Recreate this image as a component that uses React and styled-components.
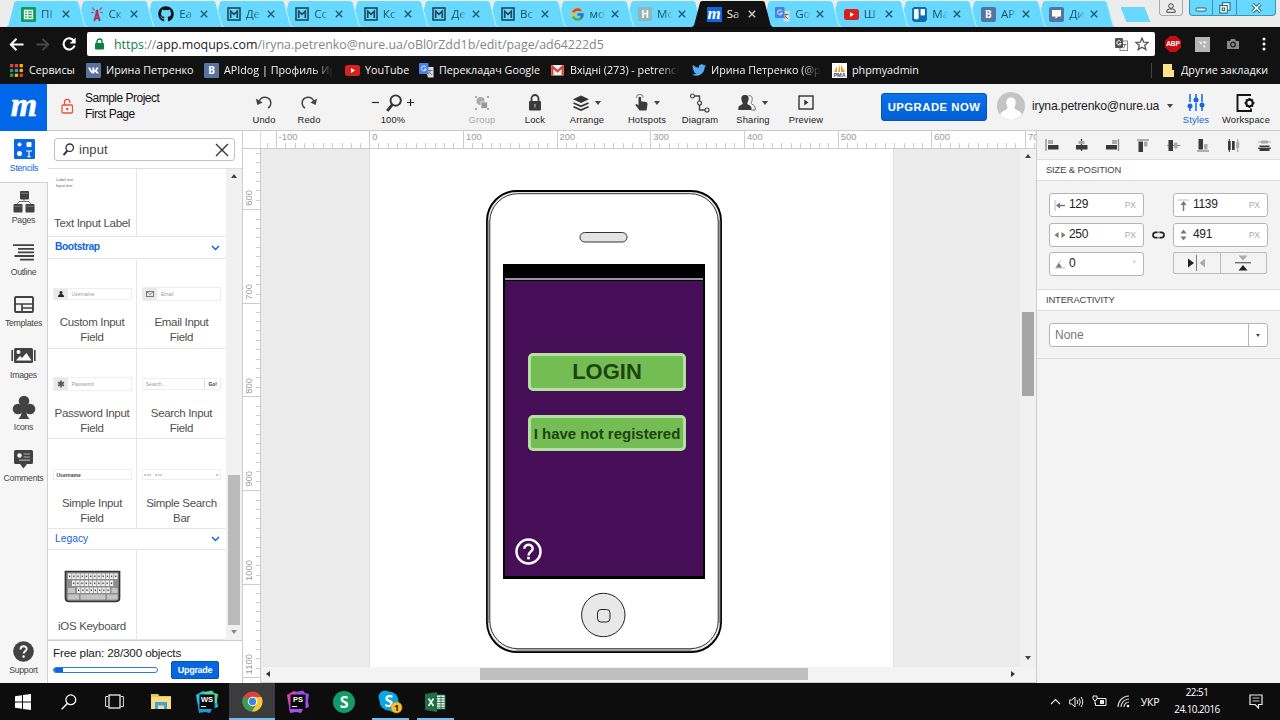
import React from "react";
import styled, { createGlobalStyle, css } from "styled-components";
import { FaGithub, FaTwitter, FaVk, FaTrello } from "react-icons/fa";
import { FcGoogle } from "react-icons/fc";

const Global = createGlobalStyle`
  * { box-sizing: border-box; }
  html, body { margin: 0; padding: 0; overflow: hidden; }
  body { width: 1280px; height: 720px; font-family: "Liberation Sans", Arial, sans-serif; color: #222; }
  svg { display: block; flex: none; }
`;

const ui = `"Open Sans", "Noto Sans", sans-serif`;

const Desktop = styled.div`
  width: 1280px; height: 720px; display: flex; flex-direction: column; overflow: hidden; background: #111;
`;

/* ---------- browser window ---------- */
const TabStrip = styled.div`
  height: 27px; flex: none; display: flex; align-items: flex-end; padding-left: 6.5px;
  background: #ececec; font-family: ${ui}; position: relative;
`;
const Tab = styled.div`
  position: relative; z-index: ${p => (p.$active ? 30 : 20 - p.$n)};
  width: 79.5px; height: 26px; margin-right: -10.95px; flex: none;
  display: flex; align-items: center; padding-left: 14.5px;
  color: ${p => (p.$active ? "#fff" : "#21505f")}; font-size: 11.6px;
  &::before, &::after {
    content: ""; position: absolute; inset: 0; z-index: -1;
    background: ${p => (p.$active ? "#121212" : "#67d8ff")};
    clip-path: polygon(0 100%, 2px 92%, 8px 4%, 10px 0, 69.5px 0, 71.5px 4%, 77.5px 92%, 79.5px 100%);
  }
  &::before { background: ${p => (p.$active ? "#121212" : "#c5effc")}; transform: translateX(1px); }
  isolation: isolate;
`;
const TabTitle = styled.span`
  width: 16px; margin-left: 5px; overflow: hidden; white-space: nowrap; line-height: 18px;
  mask-image: linear-gradient(90deg, #000 45%, transparent 100%);
`;
const TabGap = styled.span`width: 5px;`;
const NewTab = styled.div`
  width: 30px; height: 15px; margin: 0 0 5px 17px; background: #67d8ff; clip-path: polygon(0 0, 24px 0, 30px 100%, 6px 100%);
`;
const WindowButtons = styled.div`
  position: absolute; right: 4px; top: 0; display: flex; gap: 6px;
`;
const WinGroup = styled.div`
  height: 16px; display: flex; border: 1px solid ${p => (p.$plain ? "#a9a9a9" : "#3c93ae")}; border-top: 0; border-radius: 0 0 4px 4px;
  background: ${p => (p.$plain ? "#ececec" : "#67d8ff")}; overflow: hidden;
`;
const WinButton = styled.div`
  width: ${p => p.$w}px; display: flex; align-items: center; justify-content: center;
  & + & { border-left: 1px solid #3c93ae; }
`;
const AddressRow = styled.div`
  height: 33px; flex: none; background: #121212; display: flex; align-items: center; border-top: 1px solid #0a0a0a;
  padding-left: 9px;
`;
const NavIcons = styled.div`display: flex; gap: 12px; width: 78px; align-items: center;`;
const UrlBox = styled.div`
  width: 1068px; height: 24px; background: #fff; border-radius: 2px; display: flex; align-items: center;
  padding: 0 6px 0 8px; font-family: ${ui}; font-size: 12.42px; color: #858585;
`;
const UrlText = styled.span`
  flex: 1; margin-left: 10px; white-space: nowrap;
  b { font-weight: 400; color: #0b8043; } i { font-style: normal; color: #222; }
`;
const Extensions = styled.div`display: flex; align-items: center; flex: 1; padding-left: 10px;`;
const Abp = styled.div`
  width: 16px; height: 16px; background: #c70d12; color: #fff; font: bold 6.5px/16px "Liberation Sans", sans-serif; text-align: center;
  clip-path: polygon(30% 0, 70% 0, 100% 30%, 100% 70%, 70% 100%, 30% 100%, 0 70%, 0 30%);
`;
const Bookmarks = styled.div`
  height: 24px; flex: none; background: #121212; display: flex; align-items: center; padding: 0 0 4px 10px;
  font-family: ${ui}; font-size: 10.75px; color: #f4f4f4;
`;
const Bookmark = styled.div`
  display: flex; align-items: center; width: ${p => p.$w}px; flex: none; gap: ${p => p.$gap || 6}px; white-space: nowrap;
  span { overflow: hidden; 
    ${p => p.$fade && css`max-width: ${p.$fade}px; mask-image: linear-gradient(90deg, #000 82%, transparent 100%);`} }
`;
const Divider = styled.div`width: 1px; height: 15px; background: #444; margin-right: 11px;`;
const Badge = styled.div`
  width: ${p => p.$s || 15}px; height: ${p => p.$s || 15}px; flex: none; background: ${p => p.$bg}; color: ${p => p.$c || "#fff"};
  display: flex; align-items: center; justify-content: center; font: ${p => p.$font || `bold 10px ${ui}`}; border-radius: ${p => p.$r || 0}px;
`;

/* ---------- moqups app ---------- */
const AppBar = styled.div`
  height: 47px; flex: none; display: flex; background: #f3f3f3; border-bottom: 1px solid #ccc; color: #222;
`;
const Logo = styled.div`
  width: 47px; height: 47px; background: #0068e8; color: #fff; display: flex; align-items: center; justify-content: center; flex: none;
`;
const Project = styled.div`
  width: 194px; padding-left: 14px; display: flex; align-items: center; gap: 11px; font-size: 12px; line-height: 16px; color: #111;
  white-space: nowrap; padding-bottom: 3px; letter-spacing: -0.5px; flex: none;
`;
const Tool = styled.div`
  width: ${p => p.$w}px; flex: none; display: flex; flex-direction: column; align-items: center; padding-top: 8px;
  color: ${p => p.$color || "#333"};
`;
const ToolIcon = styled.div`height: 21px; display: flex; align-items: center; gap: 6px;`;
const ToolLabel = styled.div`
  font-size: 9.4px; line-height: 13px; color: ${p => p.$color || "#222"}; white-space: nowrap; letter-spacing: 0.15px;
`;
const Caret = styled.i`
  border: ${p => p.$s || 3}px solid transparent; border-top: ${p => (p.$s || 3) + 1}px solid ${p => p.$c || "#444"}; border-bottom: 0;
`;
const Upgrade = styled.div`
  width: 106px; height: 28px; margin: 9px 10px 0 56px; border-radius: 3px; border: 1px solid #0553b3; background: linear-gradient(#0a72ea, #025fd6);
  color: #fff; font-size: 11.3px; font-weight: bold; letter-spacing: 0.5px; text-align: center; line-height: 26px; white-space: nowrap; flex: none;
`;
const Account = styled.div`
  width: 183px; display: flex; align-items: center; font-size: 12.2px; color: #222; white-space: nowrap; padding-bottom: 2px; flex: none;
  span { width: 128px; margin: 0 7px 0 7px; letter-spacing: -0.17px; }
`;
const Workspace = styled.div`height: 552px; flex: none; display: flex; overflow: hidden; background: #fff;`;
const Rail = styled.div`
  width: 48px; flex: none; background: #f6f6f6; border-right: 1px solid #d2d2d2; display: flex; flex-direction: column;
`;
const RailItem = styled.div`
  height: 51.6px; flex: none; display: flex; flex-direction: column; align-items: center; justify-content: flex-end;
  padding-bottom: 7px; font-size: 8.7px; color: #444;
  ${p => p.$active && css`background: #fff; color: #0862d9; margin-right: -1px; border-bottom: 1px solid #d2d2d2;`}
  ${p => p.$last && css`margin-top: auto; padding-bottom: 6px;`}
`;
const RailIcon = styled.div`height: 24px; display: flex; align-items: center; margin-bottom: 1px;`;
const RailLabel = styled.div`line-height: 13px; white-space: nowrap; letter-spacing: -0.27px;`;

const Stencils = styled.div`width: 195px; flex: none; display: flex; flex-direction: column; border-right: 1px solid #ccc; background: #fff;`;
const Search = styled.div`
  height: 23px; margin: 7px 7px 7px 6px; flex: none; border: 1px solid #c2c2c2; border-radius: 3px; display: flex; align-items: center;
  padding: 0 5px 0 7px; font-size: 13px; color: #444;
  span { flex: 1; margin-left: 4px; letter-spacing: 0.1px; }
`;
const ListArea = styled.div`height: 472px; flex: none; display: flex; border-top: 1px solid #ddd;`;
const List = styled.div`width: 178px; flex: none;`;
const Row = styled.div`height: ${p => p.$h}px; display: grid; grid-template-columns: 88px 90px; border-bottom: 1px solid #e6e6e6;`;
const Cell = styled.div`
  display: flex; flex-direction: column; align-items: center; font-size: 11.5px; line-height: 15px; text-align: center; color: #505050;
  padding-top: ${p => p.$top}px; white-space: pre;
  & + & { border-left: 1px solid #e6e6e6; }
`;
const CellName = styled.div`margin-top: ${p => p.$mt}px; letter-spacing: -0.32px;`;
const Section = styled.div`
  height: ${p => p.$h}px; padding: 0 6px 2px 7px; display: flex; align-items: center; justify-content: space-between; font-size: 10.3px; color: #1265dc;
  border-bottom: 1px solid #e6e6e6; font-weight: ${p => (p.$bold ? 700 : 400)};
  letter-spacing: ${p => (p.$bold ? -0.45 : 0)}px;
`;
const Field = styled.div`
  width: 79px; height: ${p => p.$h || 12}px; border: 1px solid #eee; display: flex; align-items: center; font-size: 5px; line-height: 6px; color: #999;
`;
const FieldAddon = styled.div`
  width: 14px; height: 100%; background: #e9e9e9; display: flex; align-items: center; justify-content: center; margin-right: 4px;
`;
const FieldEnd = styled.div`
  margin-left: auto; height: 100%; padding: 2px 3px; border-left: 1px solid #ddd; color: #333; font-weight: bold;
`;
const FieldStrong = styled.b`margin-left: 3px; color: #444;`;
const MiniText = styled.div`
  width: 76px; font-size: 4px; line-height: 6px; text-align: left; color: #666; padding-left: 2px; margin-bottom: 13px;
`;
const ScrollY = styled.div`
  width: 16px; flex: none; background: #f1f1f1; display: flex; flex-direction: column; align-items: center; padding-top: 5px;
`;
const Thumb = styled.div`
  width: 12px; height: ${p => p.$h}px; background: ${p => p.$c || "#bbb"}; margin: ${p => p.$mt}px 0 ${p => p.$mb}px; flex: none;
`;
const ArrowUp = styled.i`border: 3px solid transparent; border-bottom: 4px solid #444; border-top: 0;`;
const Plan = styled.div`
  flex: 1; border-top: 1px solid #ccc; padding: 5px 23px 0 5px; font-size: 11.7px; line-height: 14px; color: #222; letter-spacing: -0.15px; white-space: nowrap;
`;
const PlanRow = styled.div`display: flex; align-items: center; justify-content: space-between; margin-top: 1px;`;
const Progress = styled.div`
  width: 105px; height: 6px; border: 1px solid #2d7be0; border-radius: 3px; overflow: hidden;
  &::before { content: ""; display: block; height: 100%; width: 9px; background: #0a66dd; }
`;
const PlanButton = styled.div`
  width: 48px; height: 18px; border-radius: 2px; background: #0668e0; border: 1px solid #0553b3; color: #fff; font-size: 9px; font-weight: bold; line-height: 17px; text-align: center; letter-spacing: -0.3px;
`;

const Editor = styled.div`width: 793px; flex: none; display: flex; flex-direction: column;`;
const RulerX = styled.div`
  height: 18px; flex: none; display: flex; overflow: hidden; background: #fff; border-bottom: 1px solid #ccc;
`;
const Corner = styled.div`width: 18px; flex: none; border-right: 1px solid #ddd;`;
const TicksX = styled.div`
  width: ${p => p.$w}px; flex: none; border-left: ${p => (p.$bare ? 0 : "1px solid #ccc")}; font-size: 9.3px; line-height: 12px; color: #999; padding-left: 2px;
  letter-spacing: 0.1px;
  background: repeating-linear-gradient(${p => (p.$bare ? 270 : 90)}deg, transparent 0 8.37px, #ccc 8.37px 9.37px) 0 100% / 100% 5px no-repeat;
`;
const EditorBody = styled.div`flex: 1; display: flex; min-height: 0;`;
const RulerY = styled.div`
  width: 18px; flex: none; overflow: hidden; border-right: 1px solid #ccc; background: #fff; display: flex; flex-direction: column;
`;
const TicksY = styled.div`
  height: ${p => p.$h}px; flex: none; border-bottom: 1px solid #ccc; display: flex; align-items: flex-end; padding-bottom: 3px;
  background: repeating-linear-gradient(0deg, transparent 0 8.37px, #ccc 8.37px 9.37px) 100% 0 / 4px 100% no-repeat;
  span { writing-mode: vertical-rl; transform: rotate(180deg); font-size: 9.3px; line-height: 12px; color: #999; letter-spacing: 0.1px; }
`;
const Scroller = styled.div`flex: 1; display: flex; flex-direction: column; min-width: 0;`;
const Stage = styled.div`height: 518px; flex: none; display: flex;`;
const Board = styled.div`flex: 1; background: #ececec; position: relative; padding-left: 108px;`;
const Page = styled.div`width: 525px; height: 518px; background: #fff; border: 1px solid #e0e0e0; border-width: 0 1px;`;
const ScrollX = styled.div`
  height: 16px; background: #f3f3f3; display: flex; align-items: center; padding: 0 21px 1px 5px; border-bottom: 1px solid #ccc;
`;
const ThumbX = styled.div`width: 328px; height: 12px; background: #bfbfbf; margin: 0 auto 0 210px;`;
const ArrowSide = styled.i`
  border: 3px solid transparent; ${p => (p.$left ? "border-right: 4px solid #333; border-left: 0;" : "border-left: 4px solid #333; border-right: 0;")}
`;

/* phone mock-up placed freely on the board */
const Phone = styled.div`position: absolute; left: 225px; top: 41px; width: 236px; height: 463px;`;
const Screen = styled.div`
  position: absolute; left: 17px; top: 74px; width: 202px; height: 315px; border: solid #000; border-width: 14px 2px 3px 2px; background: #460e56;
  &::before { content: ""; display: block; height: 2px; background: #999; border-bottom: 1px solid #000; }
`;
const PhoneButton = styled.div`
  position: absolute; left: 42px; top: ${p => p.$y}px; width: 158px; height: ${p => p.$h}px; border: 3px solid #b5dfa0; border-radius: 5px;
  background: #73bd54; color: #1f4211; font-weight: bold; font-size: ${p => p.$fs}px;
  display: flex; align-items: center; justify-content: center; white-space: nowrap;
`;
const Help = styled.div`position: absolute; left: 29px; top: 348px;`;

/* ---------- inspector ---------- */
const Inspector = styled.div`width: 244px; flex: none; background: #f3f3f3; border-left: 1px solid #ccc; display: flex; flex-direction: column;`;
const AlignRow = styled.div`height: 28px; display: flex; align-items: center;`;
const AlignItem = styled.div`width: 30.3px; display: flex; justify-content: center;`;
const Heading = styled.div`
  height: 22px; background: #fff; border: 1px solid #ddd; border-width: 1px 0; font-size: 9.4px; line-height: 20px; padding-left: 9px; color: #444;
  letter-spacing: -0.13px;
`;
const Form = styled.div`
  height: 108px; display: grid; grid-template-columns: 95px 29px 95px; grid-auto-rows: 24px; row-gap: 5.7px; padding: 12px 0 0 12px;
`;
const Input = styled.div`
  border: 1px solid #b5b5b5; border-radius: 3px; background: #fff; display: flex; align-items: center; font-size: 12px; color: #222; padding: 0 7px 0 4px;
  span { flex: 1; margin: -2px 0 0 3px; letter-spacing: -0.3px; } small { font-size: 8.5px; color: #aaa; }
`;
const Link = styled.div`display: flex; align-items: center; justify-content: center;`;
const Flip = styled.div`
  height: 22px; width: 94px; border: 1px solid #bbb; border-radius: 2px; display: flex;
  div { flex: 1; display: flex; align-items: center; justify-content: center; } div + div { border-left: 1px solid #bbb; }
`;
const SelectWrap = styled.div`height: 48px; padding: 12px 12px 0; border-bottom: 1px solid #ddd;`;
const Select = styled.div`
  width: 219px; height: 24px; border: 1px solid #b5b5b5; border-radius: 3px; background: #fff; display: flex; font-size: 12px; line-height: 22px; color: #777;
  span { flex: 1; padding-left: 5px; } div { width: 19px; border-left: 1px solid #b5b5b5; display: flex; align-items: center; justify-content: center; }
`;

/* ---------- windows taskbar ---------- */
const Taskbar = styled.div`height: 37px; flex: none; background: #0d0d0e; display: flex; align-items: stretch; color: #fff; font-family: ${ui};`;
const Task = styled.div`
  width: 45.9px; display: flex; align-items: center; justify-content: center; flex: none;
  background: ${p => (p.$active ? "#3c3c3e" : "none")};
  box-shadow: ${p => (p.$active ? "inset 0 -2px #76b9ed" : "none")};
  ${p => p.$open && css`background: linear-gradient(#76b9ed, #76b9ed) 50% 100% / 37px 2px no-repeat;`}
`;
const Tray = styled.div`margin-left: auto; display: flex; align-items: center; font-size: 10.5px; padding-right: 17px;`;
const TrayItem = styled.div`width: ${p => p.$w}px; display: flex; justify-content: center; white-space: nowrap; letter-spacing: -0.3px;`;
const Clock = styled.div`width: 64px; text-align: center; font-size: 9.9px; line-height: 17px; letter-spacing: -0.5px; margin: 0 20px 1px 0;`;

/* ---------- drawings ---------- */
const Svg = ({ w, h = w, vb, children, ...r }) => (
  <svg width={w} height={h} viewBox={vb || `0 0 ${w} ${h}`} fill="none" {...r}>{children}</svg>
);
const Gmark = () => (
  <Svg w={14}><rect x="1" y="1" width="12" height="12" stroke="#1f4859" strokeWidth="1.6" /><path d="M3.7 11V4.2L7 7.4l3.3-3.2V11" stroke="#1f4859" strokeWidth="1.7" /></Svg>
);
const Sheets = () => (
  <Svg w={15}><rect width="15" height="15" rx="1" fill="#109d58" /><path d="M3.5 3.5h8v8h-8zM3.5 6.2h8M3.5 8.8h8M6.5 3.5v8" stroke="#fff" strokeWidth="1.3" /></Svg>
);
const Tower = () => (
  <Svg w={14} h={15}><path d="M7 4.5L4.3 14M7 4.5L9.7 14M5.4 8.5h3.2M4.9 11.3h4.4" stroke="#b0305a" strokeWidth="1.9" /><circle cx="7" cy="4" r="1.5" fill="#b0305a" /><path d="M4 5L1 6M4.5 3L2 .5M10 5l3 1M9.5 3L12 .5" stroke="#d04468" strokeWidth="1.1" /></Svg>
);
const Translate = () => (
  <Svg w={15}><path d="M6 4h8.5v10.5H9z" fill="#ddd" /><rect width="9.5" height="11" rx="1" fill="#4a80ea" /><path d="M7 4.2a2.4 2.4 0 1 0 .2 2H5" stroke="#fff" /><path d="M8.5 7.5h5M11 6.5v1c0 2-1 3.4-2 4.2M10 9l3 3" stroke="#777" /></Svg>
);
const Tube = () => (<Svg w={15} h={11}><rect width="15" height="11" rx="2.5" fill="#d8201f" /><path d="M6 3v5l4-2.5z" fill="#fff" /></Svg>);
const Cross = ({ c = "#24596b", s = 8 }) => (<Svg w={s} vb="0 0 8 8"><path d="M.8.8l6.4 6.4M7.2.8L.8 7.2" stroke={c} strokeWidth="1.4" /></Svg>);
const Speech = () => (<Badge $bg="#56749e" $r={2}><Svg w={9} h={9}><path d="M0 0h9v6.5H6L3.5 9V6.5H0z" fill="#fff" /></Svg></Badge>);
const MLogo = ({ s, fs }) => (
  <Badge $s={s} $bg="#0d66e6" $font={`italic bold ${fs}px/10px "Liberation Serif", serif`}>m</Badge>
);
const Magnifier = ({ s = 16, c = "#333", w = 1.6 }) => (
  <Svg w={s} vb="0 0 16 16"><circle cx="9.5" cy="5.8" r="4.6" stroke={c} strokeWidth={w} /><path d="M6.5 9.5L2 15" stroke={c} strokeWidth={w * 1.5} /></Svg>
);
const Chevron = () => (<Svg w={9} h={6} style={{ marginTop: 2 }}><path d="M1 1l3.5 3.5L8 1" stroke="#1265dc" strokeWidth="1.5" /></Svg>);
const UndoIcon = ({ flip }) => (
  <Svg w={18} h={16} style={flip ? { transform: "scaleX(-1)" } : undefined}>
    <path d="M4 6.5C5.5 3 8.5 1.8 11.5 2.5c5 1.2 5.8 7.5 1.5 10.7" stroke="#444" strokeWidth="1.5" /><path d="M.8 3.6l1.6 6.4 5.2-2.4z" fill="#444" />
  </Svg>
);
const Carets = ({ d }) => <path d={d} fill="#777" />;

const tabs = [
  [<Sheets />, "ПІ"], [<Tower />, "Ск"], [<FaGithub size={16} color="#111" />, "Ea"], [<Gmark />, "Де"], [<Gmark />, "Сс"], [<Gmark />, "Кс"],
  [<Gmark />, "Де"], [<Gmark />, "Вс"], [<FcGoogle size={15} />, "мо"], [<Badge $bg="#95b3b8" $s={14}>H</Badge>, "Мо"],
  [<MLogo s={15} fs={17} />, "Sa"], [<Translate />, "Go"], [<Tube />, "Ш"], [<Badge $bg="#fff"><FaTrello size={17} color="#0b6caf" /></Badge>, "Ма"],
  [<Badge $bg="#56749e" $r={2}>B</Badge>, "AP"], [<Speech />, "Ди"],
];

const Keyboard = () => (
  <Svg w={57} h={33}>
    <path d="M1.500 1.500h54V28q0 3.500-4 3.500H5.500q-4 0-4-3.500z" fill="#8e8e8e" stroke="#333" strokeWidth="1.7" />
    {[[4, 12], [8, 10], [13, 8]].map(([x, n], r) => Array.from({ length: n }, (_, i) => (
      <g key={`${r}-${i}`}><rect x={x + i * 4.2} y={3.5 + r * 7} width="3.4" height="5.5" fill="#f2f2f2" /><rect x={x + 1 + i * 4.2} y={5.5 + r * 7} width="1.3" height="1.6" fill="#444" /></g>
    )))}
    <path d="M4 18h7v5H4zM47.500 18h6v5h-6zM4 24.500h11v5H4zM16.500 24.500h25v5h-25zM43 24.500h10.500v5H43z" fill="#c5c5c5" />
  </Svg>
);

const ink = "#424242";
const rail = [
  ["Stencils", <Svg w={21} h={20}><rect width="21" height="20" rx="1" fill="#0868e6" /><path d="M5.5 3.5v4M3.5 5.5h4" stroke="#fff" strokeWidth="1.8" /><rect x="12.5" y="3" width="5" height="5" rx="1" fill="#fff" /><circle cx="5.500" cy="14.5" r="2.5" fill="#fff" /><path d="M12 12h6M15 12v6M13.5 17.6h3" stroke="#fff" strokeWidth="1.2" /></Svg>],
  ["Pages", <Svg w={22} h={23}><path d="M11 9v3M4 14l2-2.500h10l2 2.500" stroke="#777" /><rect x="7" y="1" width="9" height="8.5" rx="1" fill={ink} /><rect x="0.5" y="14" width="9" height="8.5" rx="1" fill={ink} /><rect x="12.5" y="14" width="9" height="8.5" rx="1" fill={ink} /><path d="M8 3.300h7M1.500 16.300h7M13.500 16.300h7" stroke="#999" strokeWidth=".7" /></Svg>],
  ["Outline", <Svg w={21} h={17}><path d="M0 1.200h21M5 4.800h16M5 8.400h16M1.500 12h19.500M7 15.600h14" stroke={ink} strokeWidth="1.8" /></Svg>],
  ["Templates", <Svg w={20} h={17}><rect x="1" y="1" width="18" height="15" rx="1" stroke={ink} strokeWidth="1.9" /><path d="M1 8h18M8 8v8M8 12h11" stroke={ink} strokeWidth="1.7" /></Svg>],
  ["Images", <Svg w={25} h={17}><rect x="3" y="1" width="19" height="15" rx="1.5" fill={ink} /><path d="M1.200 3v11M23.800 3v11" stroke={ink} strokeWidth="1.6" /><path d="M5 13.500l4-4.500 2 2 4.500-5 5 7.500z" fill="#fff" /><circle cx="7.5" cy="5" r="2" fill="#fff" /></Svg>],
  ["Icons", <Svg w={24} h={25}><circle cx="12" cy="6" r="5.3" fill={ink} /><circle cx="6" cy="14" r="5.3" fill={ink} /><circle cx="18" cy="14" r="5.3" fill={ink} /><path d="M9 8h6v8l-1 .5q.8 5 3.500 7.500h-11q2.700-2.500 3.500-7.500L9 16z" fill={ink} /></Svg>],
  ["Comments", <Svg w={19} h={19}><path d="M1.500 0h16Q19 0 19 1.500v11q0 1.500-1.500 1.500H13l-3.500 4.500L6 14H1.500Q0 14 0 12.500v-11Q0 0 1.500 0z" fill={ink} /><circle cx="5.5" cy="5.5" r="2.2" fill="#fff" /><path d="M9.500 4H16M9.500 7H16M5 10.200h11" stroke="#aaa" strokeWidth="1.2" /></Svg>],
];

const A = "#3a3a3a", G = "#aaa";
const aligns = [
  <Svg w={14} h={12}><path d="M1 0v12" stroke="#888" strokeWidth="1.3" /><path d="M3 1h5v4H3z" fill={G} /><path d="M3 6h10.500v4.500H3z" fill={A} /></Svg>,
  <Svg w={14} h={12}><path d="M6.500 0v12" stroke={A} strokeWidth="1.3" /><path d="M3.500 2h6v3h-6z" fill={G} /><path d="M1 6h11.500v4.500H1z" fill={A} /></Svg>,
  <Svg w={14} h={12}><path d="M12.500 0v12" stroke="#888" strokeWidth="1.3" /><path d="M6 1h5v4H6z" fill={G} /><path d="M0 6h11v4.500H0z" fill={A} /></Svg>,
  <Svg w={13} h={13}><path d="M0 1h12" stroke="#888" strokeWidth="1.3" /><path d="M1.500 2.500H6V13H1.500z" fill={A} /><path d="M7 2.500h3.500v5H7z" fill={G} /></Svg>,
  <Svg w={13} h={13}><path d="M0 6.500h13" stroke="#777" /><path d="M1.500 1H6v11H1.500z" fill={A} /><path d="M7 3.500h3.500v6H7z" fill={G} /></Svg>,
  <Svg w={13} h={13}><path d="M0 12h12" stroke="#888" strokeWidth="1.3" /><path d="M1.500 0H6v10.500H1.500z" fill={A} /><path d="M7 5h3.500v5.500H7z" fill={G} /></Svg>,
  <Svg w={13} h={13}><path d="M1 2h2.700v9H1zM5 2h2.700v9H5z" fill={A} /><path d="M2.300 0v13" stroke={A} /><path d="M10.700 0v13" stroke={G} strokeWidth="1.2" /><path d="M9.200 3h3v6h-3z" fill={G} /></Svg>,
  <Svg w={13} h={13}><path d="M0 3h13" stroke={G} /><path d="M3 1.500h7v3H3z" fill={G} /><path d="M0 9.200h13" stroke={A} strokeWidth="1.2" /><path d="M1.500 6.500h10V8h-10zM1.500 9h10v3h-10z" fill={A} /></Svg>,
];

const jet = (colors, label) => (
  <Svg w={24} h={24}>
    <path d="M1 5L8 1l5 2-3 18-6 1z" fill={colors[0]} /><path d="M9 2l8-1.500L19 3l4 1-1 7 1 6-8 2z" fill={colors[1]} /><path d="M3 14l19-1-1 5-4 1-2 4-5-1-6 1z" fill={colors[2]} />
    <rect x="4.500" y="4.500" width="15" height="14.500" fill="#080808" /><text x="12" y="12" fill="#fff" fontSize="7.500" fontWeight="bold" textAnchor="middle" fontFamily="Liberation Sans, sans-serif">{label}</text><path d="M6 16.500h5" stroke="#fff" />
  </Svg>
);

const tasks = [
  [<Svg w={16}><path d="M0 2.200L7 1.200V7.500H0zM8 1l8-1v7.500H8zM0 8.500h7v6.300l-7-1zM8 8.500h8V16l-8-1z" fill="#fff" /></Svg>],
  [<Svg w={16}><circle cx="9.800" cy="5.800" r="4.900" stroke="#fff" strokeWidth="1.3" /><path d="M6.300 9.500L.7 15.300" stroke="#fff" strokeWidth="1.4" /></Svg>],
  [<Svg w={19} h={15}><rect x="4" y="1" width="11" height="13" stroke="#fff" strokeWidth="1.2" /><path d="M3 2.500H.6v10H3M16 2.500h2.400v10H16" stroke="#ddd" /></Svg>],
  [<Svg w={20} h={17}><path d="M0 1h7l1.500 2H20v13H0z" fill="#e9c45b" /><path d="M0 4h20v12H0z" fill="#fbdc80" /><path d="M4 16V9h12v7h-3v-3.500H7V16z" fill="#3fa3de" /></Svg>],
  [jet(["#24bfe8", "#4fd6a8", "#159bd7"], "WS")],
  [<Svg w={21} vb="0 0 24 24"><circle cx="12" cy="12" r="11.5" fill="#d9453a" /><path d="M12 12L2 6.300A11.500 11.500 0 0 0 11.500 23.500L17 15z" fill="#3a9e52" /><path d="M12 6.800h10.200A11.500 11.500 0 0 1 11.500 23.500L16.500 14.600z" fill="#f5c932" /><circle cx="12" cy="12" r="5.4" fill="#fff" /><circle cx="12" cy="12" r="4.2" fill="#4285e8" /></Svg>, "active"],
  [jet(["#e344b2", "#9a4cf0", "#a94cf2"], "PS")],
  [<Badge $s={22} $bg="#109b67" $r={11} $font={'bold 16px "Open Sans", sans-serif'}>S</Badge>],
  [<Svg w={25} h={24}><circle cx="7" cy="7" r="6.5" fill="#0aa6e5" /><circle cx="11" cy="11" r="9.5" fill="#0aa6e5" /><circle cx="15.5" cy="15.5" r="6.5" fill="#0aa6e5" /><text x="11" y="16.5" fontSize="16" fontWeight="bold" fill="#fff" textAnchor="middle" fontFamily="Open Sans, sans-serif">S</text><circle cx="18.5" cy="17.5" r="5.6" fill="#fcbf28" stroke="#a97908" strokeWidth=".6" /><text x="18.5" y="20.8" fontSize="9" fontWeight="bold" fill="#222" textAnchor="middle" fontFamily="Open Sans, sans-serif">1</text></Svg>, "open"],
  [<Svg w={21} h={20}><path d="M11 3h9v14h-9z" fill="#fff" stroke="#217346" /><path d="M12 5.500h7.500M12 8h7.500M12 10.500h7.500M12 13h7.500M12 15.300h7.500M16 4v13" stroke="#217346" strokeWidth=".9" /><path d="M0 2l12-2v20L0 18z" fill="#1e7044" /><path d="M3.500 6.500l5 7.500M8.500 6.500l-5 7.500" stroke="#fff" strokeWidth="1.5" /></Svg>, "open"],
];

export default function App() {
  return (
    <Desktop>
      <Global />
      <TabStrip>
        {tabs.map(([icon, t], i) => (
          <Tab key={i} $n={i} $active={i === 10}>{icon}<TabTitle>{t}</TabTitle><TabGap /><Cross c={i === 10 ? "#ccc" : undefined} /></Tab>
        ))}
        <NewTab />
        <WindowButtons>
          <WinGroup $plain><WinButton $w={22}><Svg w={10} h={10}><circle cx="5" cy="3" r="2.3" stroke="#444" /><path d="M.8 9.300V8Q1 6 3.500 6h3Q9 6 9.200 8v1.300z" stroke="#444" /></Svg></WinButton></WinGroup>
          <WinGroup>
            <WinButton $w={22}><Svg w={12} h={8}><rect x="1" y="4" width="10" height="3" rx="1" fill="#fff" stroke="#235e73" /></Svg></WinButton>
            <WinButton $w={24}><Svg w={12} h={12}><rect x="3.5" y=".7" width="7.5" height="7.5" fill="#fff" stroke="#235e73" /><rect x=".8" y="3.5" width="7.5" height="7.5" fill="#fff" stroke="#235e73" /><rect x="3.2" y="6" width="2.5" height="2.5" stroke="#235e73" /></Svg></WinButton>
            <WinButton $w={39}><Svg w={11} h={10}><path d="M1.500 1l8 8M9.500 1l-8 8" stroke="#235e73" strokeWidth="3.4" /><path d="M1.700 1.200l7.600 7.600M9.300 1.200L1.700 8.800" stroke="#fff" strokeWidth="1.6" /></Svg></WinButton>
          </WinGroup>
        </WindowButtons>
      </TabStrip>
      <AddressRow>
        <NavIcons>
          <Svg w={15} h={13}><path d="M14.500 6.500H2M7.500 .8L1.800 6.500l5.700 5.700" stroke="#fff" strokeWidth="2" /></Svg>
          <Svg w={14} h={13}><path d="M.5 6.500H12M6.500 .8l5.700 5.700-5.700 5.700" stroke="#484848" strokeWidth="1.9" /></Svg>
          <Svg w={14} h={14}><path d="M12 4A5.600 5.600 0 1 0 12.600 8.500" stroke="#fff" strokeWidth="2.1" /><path d="M13.700 .5v6H7.700z" fill="#fff" /></Svg>
        </NavIcons>
        <UrlBox>
          <Svg w={9} h={12}><rect y="5" width="9" height="6.5" rx="1" fill="#0b8043" /><path d="M2 5.500V3.500a2.500 2.500 0 0 1 5 0v2" stroke="#0b8043" strokeWidth="1.4" /></Svg>
          <UrlText><b>https</b>://<i>app.moqups.com</i>/iryna.petrenko@nure.ua/oBl0rZdd1b/edit/page/ad64222d5</UrlText>
          <Svg w={13} h={13}><rect x="5" y="3" width="7.5" height="9.5" stroke="#888" /><rect width="8" height="10" rx="1" fill="#555" /><path d="M5.800 3.700A2.100 2.100 0 1 0 6 5.500H4.300" stroke="#fff" /><path d="M8 6.500h3.500M9.700 6c0 3-.7 3.700-1.700 4.500" stroke="#777" /></Svg>
          <Svg w={14} h={14} style={{ marginLeft: 7 }}><path d="M7 1l1.700 4.100 4.400.3-3.400 2.900 1.100 4.300L7 10.300l-3.800 2.300 1.100-4.300L.9 5.400l4.400-.3z" stroke="#555" strokeWidth="1.3" /></Svg>
        </UrlBox>
        <Extensions>
          <Abp>ABP</Abp>
          <Svg w={15} h={15} style={{ marginLeft: 14 }}><rect width="15" height="15" fill="#b5b5b5" /><path d="M4 4l3 1.500L6 8zM8 4l4 1-3 2zM8 8l3 1-2 2z" fill="#f4f4f4" /></Svg>
          <Svg w={12} h={10} style={{ marginLeft: 17 }}><path d="M0 2h3l1-2h4l1 2h3v8H0z" fill="#888" /><circle cx="6" cy="5.5" r="2.3" stroke="#1c1c1c" strokeWidth="1.3" /></Svg>
          <Svg w={4} h={14} style={{ marginLeft: 23 }}><circle cx="2" cy="2" r="1.5" fill="#fff" /><circle cx="2" cy="7" r="1.5" fill="#fff" /><circle cx="2" cy="12" r="1.5" fill="#fff" /></Svg>
        </Extensions>
      </AddressRow>
      <Bookmarks>
        <Bookmark $w={76}><Svg w={13} h={13}>{["#e44336", "#e44336", "#f4b400", "#1e9d58", "#4285f4", "#f4b400", "#1e9d58", "#f4b400", "#e44336"].map((c, i) => <rect key={i} x={(i % 3) * 4.8} y={Math.floor(i / 3) * 4.8} width="3.3" height="3.3" fill={c} />)}</Svg><span>Сервисы</span></Bookmark>
        <Bookmark $w={118} $gap={5}><Badge $bg="#56749e" $r={1}><FaVk size={11} /></Badge><span>Ирина Петренко</span></Bookmark>
        <Bookmark $w={141} $gap={5} $fade={109}><Badge $bg="#56749e" $r={1}>B</Badge><span>APIdog | Профиль Ирин</span></Bookmark>
        <Bookmark $w={74} $gap={5}><Tube /><span>YouTube</span></Bookmark>
        <Bookmark $w={132} $gap={5}><Translate /><span>Перекладач Google</span></Bookmark>
        <Bookmark $w={141} $gap={6} $fade={109}><Svg w={13} h={11}><rect width="13" height="10.5" rx="1" fill="#eee" /><path d="M1.300 10.500V1.500l5.200 4.800 5.200-4.800v9" stroke="#d44237" strokeWidth="2.2" /></Svg><span>Вхідні (273) - petrenck</span></Bookmark>
        <Bookmark $w={140} $gap={5} $fade={110}><FaTwitter size={14} color="#55acee" /><span>Ирина Петренко (@p</span></Bookmark>
        <Bookmark $w={319} $gap={5}><Svg w={15}><rect width="15" height="15" fill="#fff" /><path d="M2 9L5 3v6zM6 9l2-8v8zM9 9V2l4 7z" fill="#f79a22" /><text x="7.5" y="14.3" textAnchor="middle" fontSize="5.5" fontWeight="bold" fill="#446" fontFamily="Liberation Sans, sans-serif">PMA</text></Svg><span>phpmyadmin</span></Bookmark>
        <Divider />
        <Bookmark $w={110} $gap={7}><Svg w={11} h={13}><path d="M0 0h9v6h2v7H0z" fill="#fce38a" /></Svg><span>Другие закладки</span></Bookmark>
      </Bookmarks>

      <AppBar>
        <Logo><Svg w={30} h={26}><text x="15" y="21" textAnchor="middle" fontSize="34" fontStyle="italic" fontWeight="bold" fill="#fff" stroke="#fff" strokeWidth=".6" fontFamily="Liberation Serif, serif">m</text></Svg></Logo>
        <Project>
          <Svg w={13} h={16}><rect x="1" y="7" width="10.5" height="8" rx="1" stroke="#e4573d" strokeWidth="1.3" /><path d="M3.500 7V4a2.700 2.700 0 0 1 5.400 0v1" stroke="#e4573d" strokeWidth="1.3" /><circle cx="6.2" cy="11" r="1.2" fill="#e4573d" /></Svg>
          <div>Sample Project<br />First Page</div>
        </Project>
        <Tool $w={46}><ToolIcon><UndoIcon /></ToolIcon><ToolLabel>Undo</ToolLabel></Tool>
        <Tool $w={44}><ToolIcon><UndoIcon flip /></ToolIcon><ToolLabel>Redo</ToolLabel></Tool>
        <Tool $w={124}><ToolIcon><Svg w={7} h={7}><path d="M0 3.500h7" stroke="#222" strokeWidth="1.2" /></Svg><Magnifier s={18} w={1.7} /><Svg w={7} h={7} style={{ marginLeft: -2 }}><path d="M0 3.500h7M3.500 0v7" stroke="#222" strokeWidth="1.2" /></Svg></ToolIcon><ToolLabel>100%</ToolLabel></Tool>
        <Tool $w={54}><ToolIcon><Svg w={16} h={16}><circle cx="6.5" cy="6" r="4" fill="#aaa" /><rect x="7" y="7" width="6.5" height="6.5" fill="#999" stroke="#f3f3f3" strokeWidth=".7" /><path d="M1 1h2v2H1zM13 1h2v2h-2zM1 13h2v2H1zM13 13h2v2h-2z" fill="#aaa" /></Svg></ToolIcon><ToolLabel $color="#aaa">Group</ToolLabel></Tool>
        <Tool $w={52}><ToolIcon><Svg w={12} h={17}><rect y="7" width="12" height="9.5" rx="1" fill="#3a3a3a" /><path d="M2.500 8V4.500a3.500 3.500 0 0 1 7 0V8" stroke="#3a3a3a" strokeWidth="1.8" /><path d="M6 10v3.500" stroke="#aaa" strokeWidth="1.3" /></Svg></ToolIcon><ToolLabel>Lock</ToolLabel></Tool>
        <Tool $w={52}><ToolIcon><Svg w={16} h={16}><path d="M8 .5l8 3.700-8 3.700L0 4.200z" fill="#333" /><path d="M.5 8L8 11.300 15.500 8M.5 11.700L8 15l7.500-3.300" stroke="#333" strokeWidth="1.8" /></Svg><Caret /></ToolIcon><ToolLabel>Arrange</ToolLabel></Tool>
        <Tool $w={68}><ToolIcon><Svg w={13} h={17}><path d="M3.500 9V4a1.300 1.300 0 0 1 2.600 0v3.200l5 .9q1.600.5 1.400 2.300l-1 6H4.500L.5 11q0-2 3 .5z" fill="#3a3a3a" /><path d="M1.500 4a3.300 3.300 0 0 1 6.600-.3" stroke="#888" strokeWidth="1.1" /></Svg><Caret /></ToolIcon><ToolLabel>Hotspots</ToolLabel></Tool>
        <Tool $w={38}><ToolIcon><Svg w={20} h={20}><path d="M4 3h5.500v6M9.500 11.500V17H15" stroke="#444" strokeWidth="1.4" /><circle cx="2.5" cy="3" r="2" stroke="#444" strokeWidth="1.2" /><circle cx="9.5" cy="10" r="2" fill="#f3f3f3" stroke="#444" strokeWidth="1.2" /><circle cx="17" cy="17" r="2" stroke="#444" strokeWidth="1.2" /></Svg></ToolIcon><ToolLabel>Diagram</ToolLabel></Tool>
        <Tool $w={68}><ToolIcon><Svg w={18} h={17}><path d="M10.500 1.700c3-.5 4 1.500 3.700 4-.2 1.800-1 2.500-1 3.700 0 1.200 4 1.200 4 4.600v2H13.500" stroke="#777" /><path d="M7 1c3 0 4 2 3.600 4.500-.3 2-1.300 3-1.300 4 0 1.500 4.200 1.500 4.200 4.700V16H.3v-1.800c0-3.200 4.400-3.200 4.400-4.700 0-1-1-2-1.300-4C3 3 4 1 7 1z" fill="#3a3a3a" /></Svg><Caret /></ToolIcon><ToolLabel>Sharing</ToolLabel></Tool>
        <Tool $w={38}><ToolIcon><Svg w={16} h={15}><rect x="1" y="1" width="14" height="13" stroke="#333" strokeWidth="1.4" /><path d="M6.300 4.500v6l4-3z" fill="#333" /></Svg></ToolIcon><ToolLabel>Preview</ToolLabel></Tool>
        <Upgrade>UPGRADE NOW</Upgrade>
        <Account>
          <Svg w={28} h={28}><circle cx="14" cy="14" r="14" fill="#c4c4c4" /><path d="M14 5.500c3.500 0 5 2.500 4.700 5.500-.2 2.300-1.200 3.500-1.200 5 0 2.500 6 2 7.300 6.500A14 14 0 0 1 14 28 14 14 0 0 1 3.200 22.500C4.500 18 10.500 18.500 10.500 16c0-1.500-1-2.700-1.200-5C9 8 10.500 5.500 14 5.500z" fill="#fff" /></Svg>
          <span>iryna.petrenko@nure.ua</span><Caret />
        </Account>
        <Tool $w={32} $color="#1266e0"><ToolIcon><Svg w={18} h={19}><path d="M3 1v8M3 14v4M9 1v4M9 10v8M15 1v8M15 14v4" stroke="#1266e0" strokeWidth="1.5" /><circle cx="3" cy="13" r="2.5" fill="#1266e0" /><circle cx="9" cy="7" r="2.5" fill="#1266e0" /><circle cx="15" cy="12" r="2.5" fill="#1266e0" /></Svg></ToolIcon><ToolLabel $color="#1266e0">Styles</ToolLabel></Tool>
        <Tool $w={68}><ToolIcon><Svg w={20} h={18}><path d="M15 1H1.500v16H15v-2.500" stroke="#151515" strokeWidth="1.9" /><circle cx="13.5" cy="9" r="3.3" stroke="#151515" strokeWidth="2.2" /><path d="M13.500 4v2M13.500 12v2M8.500 9h2M16.500 9h2M10 5.500l1.400 1.400M17 5.500l-1.400 1.400M10 12.500l1.400-1.400M17 12.500l-1.400-1.400" stroke="#151515" strokeWidth="1.7" /></Svg></ToolIcon><ToolLabel>Workspace</ToolLabel></Tool>
      </AppBar>

      <Workspace>
        <Rail>
          {rail.map(([name, icon], i) => (
            <RailItem key={name} $active={i === 0}><RailIcon>{icon}</RailIcon><RailLabel>{name}</RailLabel></RailItem>
          ))}
          <RailItem $last>
            <RailIcon><Svg w={21} h={21}><circle cx="10.5" cy="10.5" r="10.3" fill={ink} /><path d="M7.500 8.500c0-4.500 6.500-4 6.200-.5-.2 2-3 2-3 4.600" stroke="#fff" strokeWidth="1.9" /><circle cx="10.6" cy="15.5" r="1.2" fill="#fff" /></Svg></RailIcon>
            <RailLabel>Support</RailLabel>
          </RailItem>
        </Rail>

        <Stencils>
          <Search><Magnifier s={13} w={1.6} /><span>input</span><Svg w={14}><path d="M1 1l12 12M13 1L1 13" stroke="#333" strokeWidth="1.4" /></Svg></Search>
          <ListArea>
            <List>
              <Row $h={68}><Cell $top={8}><MiniText>Label text<br />Input text</MiniText><CellName $mt={14}>Text Input Label</CellName></Cell><Cell /></Row>
              <Section $h={22} $bold>Bootstrap<Chevron /></Section>
              <Row $h={90}>
                <Cell $top={29}><Field><FieldAddon><Svg w={6} h={6}><circle cx="3" cy="1.5" r="1.5" fill="#222" /><path d="M0 6q0-3 3-3t3 3z" fill="#222" /></Svg></FieldAddon>Username</Field><CellName $mt={15}>{"Custom Input\nField"}</CellName></Cell>
                <Cell $top={28}><Field $h={14}><FieldAddon><Svg w={8} h={6}><rect x=".5" y=".5" width="7" height="5" stroke="#777" /><path d="M.5 .5L4 3.500 7.500 .5" stroke="#777" strokeWidth=".8" /></Svg></FieldAddon>Email</Field><CellName $mt={14}>{"Email Input\nField"}</CellName></Cell>
              </Row>
              <Row $h={90}>
                <Cell $top={28}><Field $h={14}><FieldAddon><Svg w={8} h={8}><path d="M4 .5v7M1 2.300l6 3.400M7 2.300l-6 3.400" stroke="#555" strokeWidth="1.7" /></Svg></FieldAddon>Password</Field><CellName $mt={15}>{"Password Input\nField"}</CellName></Cell>
                <Cell $top={29}><Field><span>&nbsp; Search...</span><FieldEnd>Go!</FieldEnd></Field><CellName $mt={16}>{"Search Input\nField"}</CellName></Cell>
              </Row>
              <Row $h={90}>
                <Cell $top={30}><Field $h={11}><FieldStrong>Username</FieldStrong></Field><CellName $mt={16}>{"Simple Input\nField"}</CellName></Cell>
                <Cell $top={30}><Field $h={11}><Svg w={77} h={6}><path d="M1 3h7M12 3h7M73 3h3" stroke="#999" strokeDasharray="2 .6" /></Svg></Field><CellName $mt={16}>{"Simple Search\nBar"}</CellName></Cell>
              </Row>
              <Section $h={21}>Legacy<Chevron /></Section>
              <Row $h={90}><Cell $top={20}><Keyboard /><CellName $mt={16}>iOS Keyboard</CellName></Cell><Cell /></Row>
            </List>
            <ScrollY><ArrowUp /><Thumb $h={150} $mt={297} $mb={5} /><Caret $c="#888" /></ScrollY>
          </ListArea>
          <Plan>
            Free plan: 28/300 objects
            <PlanRow><Progress /><PlanButton>Upgrade</PlanButton></PlanRow>
          </Plan>
        </Stencils>

        <Editor>
          <RulerX>
            <Corner /><TicksX $w={14.5} $bare />
            {["-100", "0", "100", "200", "300", "400", "500", "600", "700"].map(v => <TicksX key={v} $w={93.7}>{v}</TicksX>)}
          </RulerX>
          <EditorBody>
            <RulerY>
              {[600, 700, 800, 900, 1000, 1100].map((v, i) => <TicksY key={v} $h={i ? 93.7 : 61}><span>{v}</span></TicksY>)}
            </RulerY>
            <Scroller>
              <Stage>
                <Board>
                  <Page />
                  <Phone>
                    <Svg w={236} h={463}>
                      <rect x="1" y="1" width="234" height="461" rx="30" fill="#e6e6e6" stroke="#000" strokeWidth="1.9" />
                      <path d="M2.600 30v403M233.400 30v403M30 460.300h176" stroke="#999" strokeWidth="1.8" />
                      <rect x="3.800" y="3.700" width="228.400" height="455" rx="28" fill="#fff" stroke="#222" strokeWidth=".9" />
                      <rect x="94" y="42.500" width="47" height="9.500" rx="4.700" fill="#e4e4e4" stroke="#333" />
                      <circle cx="117.300" cy="425" r="21.700" fill="#e8e8e8" stroke="#222" />
                      <rect x="111.500" y="419.500" width="12.500" height="12.500" rx="3.500" stroke="#222" />
                    </Svg>
                    <Screen />
                    <PhoneButton $y={163} $h={38} $fs={22}>LOGIN</PhoneButton>
                    <PhoneButton $y={225} $h={36} $fs={15}>I have not registered</PhoneButton>
                    <Help><Svg w={27}><circle cx="13.5" cy="13.5" r="12" stroke="#fff" strokeWidth="2.5" /><path d="M9.300 10.700c.2-5.300 8.600-5 8.400 0-.2 2.900-4.200 3.200-4.200 6.800" stroke="#fff" strokeWidth="2.5" /><rect x="12.2" y="18.8" width="2.6" height="2.6" fill="#fff" /></Svg></Help>
                  </Phone>
                </Board>
                <ScrollY><ArrowUp /><Thumb $c="#a5a5a5" $h={84} $mt={154} $mb={260} /><Caret /></ScrollY>
              </Stage>
              <ScrollX><ArrowSide $left /><ThumbX /><ArrowSide /></ScrollX>
            </Scroller>
          </EditorBody>
        </Editor>

        <Inspector>
          <AlignRow>{aligns.map((a, i) => <AlignItem key={i}>{a}</AlignItem>)}</AlignRow>
          <Heading>SIZE &amp; POSITION</Heading>
          <Form>
            <Input><Svg w={12} h={12}><path d="M1 1v11" stroke="#bbb" /><path d="M3 6.500h8" stroke="#777" strokeWidth="1.5" /><Carets d="M2 6.500l4-3v6z" /></Svg><span>129</span><small>PX</small></Input>
            <i />
            <Input><Svg w={12} h={12}><path d="M0 1h11" stroke="#bbb" /><path d="M5.500 3v9" stroke="#777" strokeWidth="1.5" /><Carets d="M5.500 2l3 4h-6z" /></Svg><span>1139</span><small>PX</small></Input>
            <Input><Svg w={12} h={10}><Carets d="M4.500 2v6L.5 5zM7.500 2v6l4-3z" /></Svg><span>250</span><small>PX</small></Input>
            <Link><Svg w={13} h={8}><path d="M5.500 1.300H3.700a2.700 2.700 0 0 0 0 5.400h1.800M7.500 1.300h1.800a2.700 2.700 0 0 1 0 5.400H7.500" stroke="#222" strokeWidth="1.7" /><path d="M5.500 1.300h2M5.500 6.700h2" stroke="#777" strokeWidth="1.4" /></Svg></Link>
            <Input><Svg w={12} h={12}><Carets d="M2.500 4.500h6l-3-4zM2.500 7.500h6l-3 4z" /></Svg><span>491</span><small>PX</small></Input>
            <Input><Svg w={12} h={10}><path d="M1 9h10M2 8l5-7" stroke="#bbb" /><Carets d="M2 8.500l3-4.500 3 4.500z" /></Svg><span>0</span><small>°</small></Input>
            <i />
            <Flip>
              <div><Svg w={19} h={16}><path d="M9.500 0v16" stroke="#777" /><path d="M1 3.500v9l6-4.500z" fill="#222" /><path d="M18 3.500v9l-5.500-4.500z" fill="#aaa" /></Svg></div>
              <div><Svg w={16} h={18}><path d="M0 8.700h16" stroke="#666" strokeWidth="1.3" /><path d="M3.500 1.500h9L8 6.500z" fill="#aaa" /><path d="M3.500 16.500h9L8 11z" fill="#222" /></Svg></div>
            </Flip>
          </Form>
          <Heading>INTERACTIVITY</Heading>
          <SelectWrap><Select><span>None</span><div><Caret $s={2} /></div></Select></SelectWrap>
        </Inspector>
      </Workspace>

      <Taskbar>
        {tasks.map(([icon, state], i) => <Task key={i} $active={state === "active"} $open={state === "open"}>{icon}</Task>)}
        <Tray>
          <TrayItem $w={20}><Svg w={11} h={7}><path d="M1 6l4.500-4.500L10 6" stroke="#eee" strokeWidth="1.2" /></Svg></TrayItem>
          <TrayItem $w={23}><Svg w={15} h={12}><path d="M.7 4h2L6 1v10L2.700 8h-2z" stroke="#eee" /><path d="M8 4q1.500 2 0 4M10 2.500q2.700 3.500 0 7M12 1q3.500 5 0 10" stroke="#eee" /></Svg></TrayItem>
          <TrayItem $w={23}><Svg w={15} h={13}><path d="M5 3.500h9v7H3.500V8" stroke="#eee" /><path d="M1 1v2.500q0 2 2 2t2-2V1M2 0v2M4 0v2M3 5v4" stroke="#eee" /><path d="M8 5h4v4H8z" fill="#eee" /></Svg></TrayItem>
          <TrayItem $w={24}><Svg w={13} h={13}><path d="M1 12A11 11 0 0 1 12 1M4 12a8 8 0 0 1 8-8M7 12a5 5 0 0 1 5-5" stroke="#ccc" strokeWidth="1.2" /><circle cx="11" cy="11" r="1.3" fill="#fff" /></Svg></TrayItem>
          <TrayItem $w={30}>УКР</TrayItem>
          <Clock>22:51<br />24.10.2016</Clock>
          <Svg w={14} h={15}><path d="M1 1h12v9.500H9.500V14L6 10.500H1z" stroke="#eee" strokeWidth="1.2" /><path d="M3.500 4h7M3.500 7h7" stroke="#bbb" /></Svg>
        </Tray>
      </Taskbar>
    </Desktop>
  );
}
